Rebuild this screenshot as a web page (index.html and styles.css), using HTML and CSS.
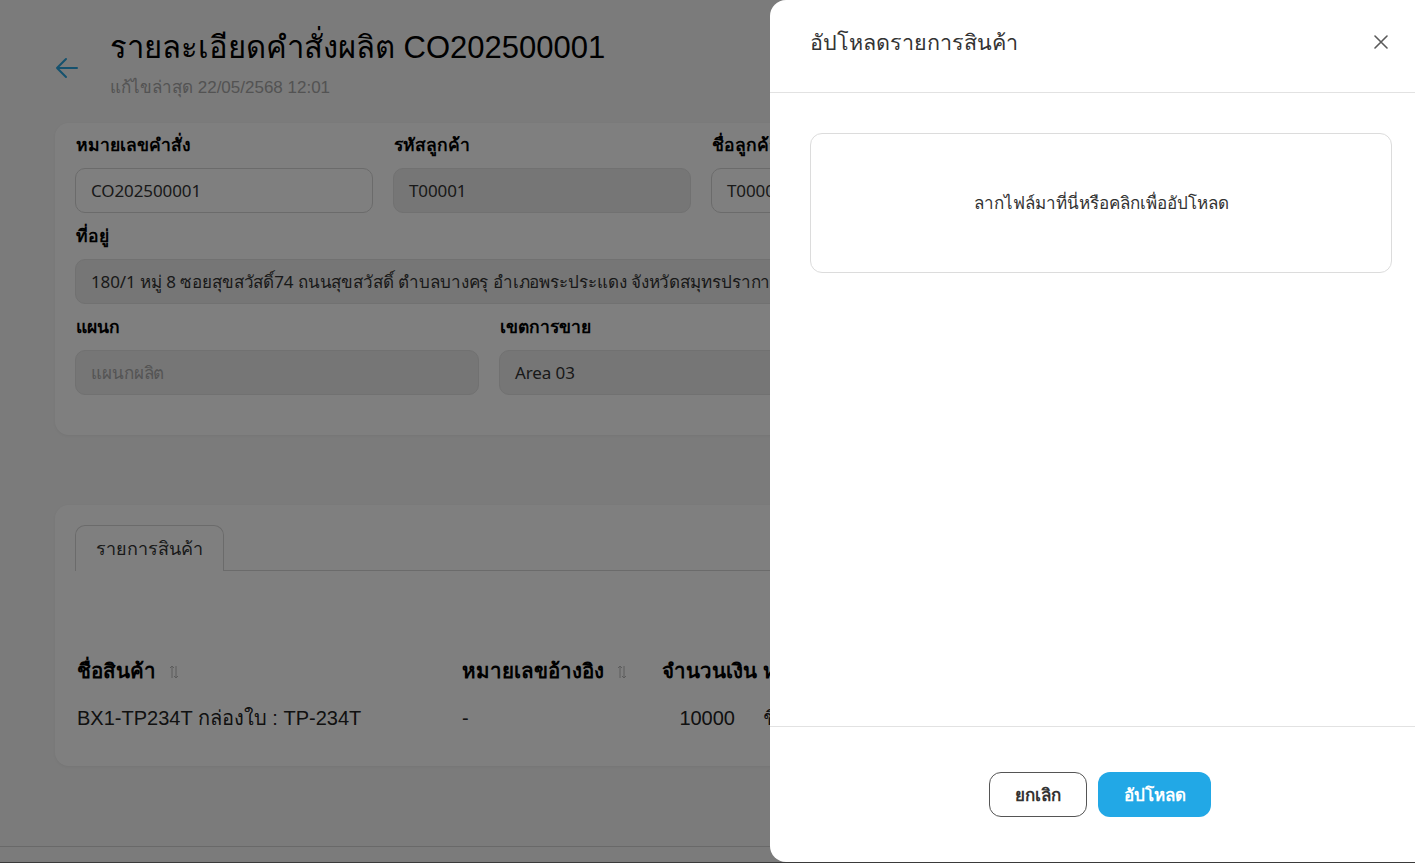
FILE: index.html
```html
<!DOCTYPE html>
<html lang="th">
<head>
<meta charset="utf-8">
<title>รายละเอียดคำสั่งผลิต</title>
<link rel="stylesheet" href="styles.css">
</head>
<body>
<div class="page">
  <header class="page-head">
    <svg class="back" width="24" height="22" viewBox="0 0 24 22" fill="none" stroke="#2aa3dc" stroke-width="2" stroke-linecap="round" stroke-linejoin="round"><path d="M22 11H2M11 2L2 11l9 9"/></svg>
    <div class="head-text">
      <h1 class="title">รายละเอียดคำสั่งผลิต CO202500001</h1>
      <div class="subtitle">แก้ไขล่าสุด 22/05/2568 12:01</div>
    </div>
  </header>

  <section class="card info">
    <div class="row cols4">
      <div class="field"><label class="label">หมายเลขคำสั่ง</label><div class="input">CO202500001</div></div>
      <div class="field"><label class="label">รหัสลูกค้า</label><div class="input disabled">T00001</div></div>
      <div class="field"><label class="label">ชื่อลูกค้า</label><div class="input">T00001</div></div>
      <div class="field"><label class="label">วันที่</label><div class="input">22/05/2568</div></div>
    </div>
    <div class="row">
      <div class="field"><label class="label">ที่อยู่</label><div class="input disabled">180/1 หมู่ 8 ซอยสุขสวัสดิ์74 ถนนสุขสวัสดิ์ ตำบลบางครุ อำเภอพระประแดง จังหวัดสมุทรปราการ 10130</div></div>
    </div>
    <div class="row cols3">
      <div class="field"><label class="label">แผนก</label><div class="input disabled placeholder">แผนกผลิต</div></div>
      <div class="field"><label class="label">เขตการขาย</label><div class="input disabled">Area 03</div></div>
      <div class="field"><label class="label">พนักงานขาย</label><div class="input disabled">-</div></div>
    </div>
  </section>

  <section class="card items">
    <div class="tabs"><div class="tab">รายการสินค้า</div></div>
    <table class="table">
      <thead>
        <tr>
          <th class="c-name">ชื่อสินค้า <svg class="sort" width="10" height="14" viewBox="0 0 10 14" fill="none" stroke="#b8b8b8" stroke-width="1"><path d="M3 13V1M1 3l2-2 2 2M7 1v12M5 11l2 2 2-2"/></svg></th>
          <th class="c-ref">หมายเลขอ้างอิง <svg class="sort" width="10" height="14" viewBox="0 0 10 14" fill="none" stroke="#b8b8b8" stroke-width="1"><path d="M3 13V1M1 3l2-2 2 2M7 1v12M5 11l2 2 2-2"/></svg></th>
          <th class="c-amt">จำนวนเงิน</th>
          <th class="c-unit">หน่วย</th>
        </tr>
      </thead>
      <tbody>
        <tr>
          <td class="c-name">BX1-TP234T กล่องใบ : TP-234T</td>
          <td class="c-ref">-</td>
          <td class="c-amt num">10000</td>
          <td class="c-unit">ชิ้น</td>
        </tr>
      </tbody>
    </table>
  </section>
  <div class="page-foot"></div>
</div>

<div class="overlay"></div>

<aside class="drawer">
  <div class="drawer-head">
    <h2 class="drawer-title">อัปโหลดรายการสินค้า</h2>
    <svg class="close" width="14" height="14" viewBox="0 0 14 14" fill="none" stroke="#5a5a5a" stroke-width="1.6" stroke-linecap="round"><path d="M1 1l12 12M13 1L1 13"/></svg>
  </div>
  <div class="drawer-body">
    <div class="dropzone">ลากไฟล์มาที่นี่หรือคลิกเพื่ออัปโหลด</div>
  </div>
  <div class="drawer-foot">
    <button class="btn btn-outline">ยกเลิก</button>
    <button class="btn btn-primary">อัปโหลด</button>
  </div>
</aside>
<div class="bottom-edge"></div>
</body>
</html>
```

FILE: styles.css
```css
* { box-sizing: border-box; }
html, body { margin: 0; height: 100%; }
body {
  background: #f6f6f6;
  font-family: "Liberation Sans", "Noto Sans", sans-serif;
  color: #222;
  overflow: hidden;
  position: relative;
}
.page {
  padding: 28px 0 0 55px;
  width: 1347px;
}
.page-head {
  display: flex;
  align-items: center;
  gap: 31px;
  height: 72px;
}
.back { flex: none; margin-top: 8px; }
.title {
  margin: 0;
  font-size: 31px;
  line-height: 38px;
  font-weight: 400;
  color: #000;
}
.subtitle {
  font-size: 17px;
  line-height: 22px;
  color: #a6a6a6;
  margin-top: 10px;
}
.card {
  background: #fff;
  border-radius: 14px;
  box-shadow: 0 1px 3px rgba(0,0,0,0.05);
}
.info {
  margin-top: 23px;
  padding: 10px 20px 40px 20px;
  display: flex;
  flex-direction: column;
  gap: 11px;
}
.row { display: grid; grid-template-columns: 1fr; gap: 20px; }
.cols4 { grid-template-columns: repeat(4, 1fr); }
.cols3 { grid-template-columns: repeat(3, 1fr); }
.field { display: flex; flex-direction: column; min-width: 0; }
.label {
  font-size: 17.5px;
  font-weight: 700;
  line-height: 24px;
  margin-bottom: 11px;
  color: #000;
  padding-left: 1px;
}
.input {
  height: 45px;
  border: 1px solid #d6d6d6;
  border-radius: 10px;
  padding: 0 15px;
  display: flex;
  align-items: center;
  font-family: "Noto Sans", "Liberation Sans", sans-serif;
  font-size: 17px;
  color: #333;
  background: #fff;
  white-space: nowrap;
  overflow: hidden;
  letter-spacing: -0.1px;
}
.input.disabled { background: #ececec; border-color: #e2e2e2; }
.input.placeholder { color: #a8a8a8; }
.items {
  margin-top: 70px;
  padding: 20px 20px 24px 20px;
}
.tabs {
  display: flex;
  border-bottom: 1px solid #d6d6d6;
}
.tab {
  height: 46px;
  padding: 0 20px;
  display: flex;
  align-items: center;
  border: 1px solid #d6d6d6;
  border-bottom: none;
  border-radius: 10px 10px 0 0;
  font-size: 18px;
  color: #333;
  margin-bottom: -1px;
  background: #fff;
}
.table {
  margin-top: 75px;
  border-collapse: collapse;
  font-size: 20px;
}
.table th {
  text-align: left;
  font-weight: 700;
  font-size: 20.5px;
  color: #000;
  height: 48px;
  padding: 0 2px;
  white-space: nowrap;
}
.table td {
  height: 48px;
  padding: 0 2px;
  color: #222;
  white-space: nowrap;
}
.sort { margin-left: 7px; vertical-align: -1px; }
.c-name { width: 385px; }
.c-ref { width: 200px; }
.c-amt { width: 103px; }
.num { text-align: right; padding-right: 28px !important; }
.c-unit { padding-left: 0 !important; }
.page-foot {
  position: absolute;
  left: 0; right: 0;
  top: 846px;
  border-top: 1px solid #d2d2d2;
}
.overlay {
  position: absolute;
  inset: 0;
  background: rgba(0,0,0,0.5);
}
.drawer {
  position: absolute;
  left: 770px;
  top: 0;
  bottom: 1px;
  width: 660px;
  background: #fff;
  border-radius: 16px 0 0 16px;
  display: flex;
  flex-direction: column;
}
.drawer-head {
  height: 93px;
  border-bottom: 1px solid #e2e2e2;
  padding: 0 42px 0 40px;
  display: flex;
  align-items: center;
  justify-content: space-between;
}
.drawer-title {
  margin: 0;
  font-size: 21.5px;
  font-weight: 400;
  color: #333;
  line-height: 28px;
  margin-top: -6px;
}
.close { margin-top: -8px; }
.drawer-body {
  flex: 1;
  padding: 40px 38px 0 40px;
}
.dropzone {
  height: 140px;
  border: 1px solid #dcdcdc;
  border-radius: 12px;
  display: flex;
  align-items: center;
  justify-content: center;
  font-size: 17px;
  color: #333;
  padding-bottom: 2px;
}
.drawer-foot {
  height: 136px;
  border-top: 1px solid #e2e2e2;
  display: flex;
  align-items: center;
  justify-content: center;
  gap: 11px;
}
.btn {
  height: 45px;
  border-radius: 12px;
  font-family: "Liberation Sans", "Noto Sans", sans-serif;
  font-size: 17px;
  font-weight: 700;
  cursor: pointer;
}
.btn-outline {
  width: 98px;
  background: #fff;
  border: 1px solid #555;
  color: #333;
}
.btn-primary {
  width: 113px;
  background: #22a8e6;
  border: none;
  color: #fff;
}
.bottom-edge {
  position: absolute;
  left: 0; right: 0; bottom: 0;
  height: 1px;
  background: #3a3a3a;
}
```
